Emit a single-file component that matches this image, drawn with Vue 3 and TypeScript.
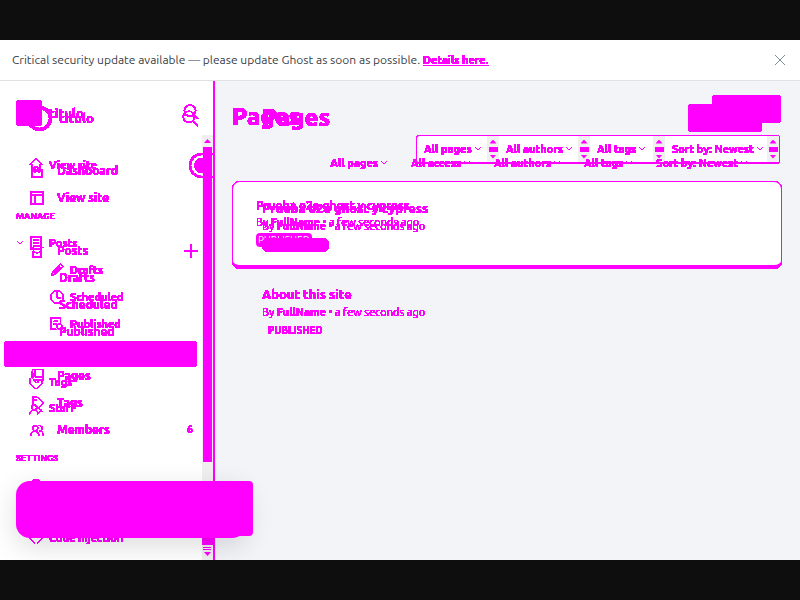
<script setup lang="ts">
interface NavItem {
  label: string
  icon?: string
  kind?: 'child' | 'active' | 'heading' | 'spacer'
  count?: string
  add?: boolean
  caret?: boolean
  size?: 'small' | 'medium' | 'large'
}

const icons: Record<string, string> = {
  home: 'M1 8 8 1l7 7M3 7v8h10V7M6 15v-5h4v5',
  house: 'M2 7h12v8H2zM4 7 8 3l4 4M5 10l3-3 3 3',
  layout: 'M1 1h14v14H1zM1 5h14M6 5v10',
  posts: 'M2 1h12v14H2zM5 5h6M5 8h6M5 11h4',
  postsOpen: 'M1 4h3M12 4h3M4 8l4 3 4-3M3 9v6h10V9M4 2h9v6',
  pen: 'M2 14l1-4 9-9 3 3-9 9zM4 11l7-7M5 12l7-7',
  clock: 'M15 8A7 7 0 1 1 1 8a7 7 0 0 1 14 0M8 3v6h4',
  published: 'M12 6V1H1v13h6M4 5h5M4 8h4M14 11a3 3 0 1 1-6 0 3 3 0 0 1 6 0M13 13l2 2',
  pages: 'M3 0h12v13H5L2 10zM6 0v9h8M3 4v6',
  tag: 'M1 4v6l7 6 7-6V5M5 6l3 3M10 6v3',
  label: 'M3 1h5l7 7-6 6-6-6zM6 4h1v1H6z',
  staff: 'M9 7a3 3 0 1 1-6 0 3 3 0 0 1 6 0M1 15c0-6 9-6 9 0M12 9l3 3M10 15l4-5',
  members: 'M9 6a3 3 0 1 1-6 0 3 3 0 0 1 6 0M1 14c0-6 9-6 9 0M10 3c5-1 5 6 1 6M11 9c3 0 4 2 4 5',
  code: 'M5 3 1 8l5 6M11 3l4 5-5 6',
  gear: 'M5 1h2v2h2V1h2v3l3 2v4l-3 2v3H5v-3l-3-2V6l3-2z',
}

const currentNav: NavItem[] = [
  { label: 'View site', icon: 'home' },
  { label: 'Manage', kind: 'heading', size: 'large' },
  { label: 'Posts', icon: 'posts', caret: true },
  { label: 'Drafts', icon: 'pen', kind: 'child' },
  { label: 'Scheduled', icon: 'clock', kind: 'child' },
  { label: 'Published', icon: 'published', kind: 'child' },
  { label: 'Pages', kind: 'active' },
  { label: 'Tags', icon: 'tag' },
  { label: 'Staff', icon: 'staff' },
  { label: 'Settings', kind: 'heading', size: 'medium' },
  { label: 'General', icon: 'gear' },
  { label: '', kind: 'spacer', size: 'small' },
  { label: 'Code injection', icon: 'code' },
]

const previousNav: NavItem[] = [
  { label: 'Dashboard', icon: 'house' },
  { label: 'View site', icon: 'layout' },
  { label: '', kind: 'spacer', size: 'small' },
  { label: 'Posts', icon: 'postsOpen', add: true },
  { label: 'Drafts', kind: 'child' },
  { label: 'Scheduled', kind: 'child' },
  { label: 'Published', kind: 'child' },
  { label: '', kind: 'spacer', size: 'medium' },
  { label: 'Pages', icon: 'pages' },
  { label: 'Tags', icon: 'label' },
  { label: 'Members', icon: 'members', count: '6' },
]

const currentFilters: string[] = ['All pages', 'All authors', 'All tags', 'Sort by: Newest']
const previousFilters: string[] = ['All pages', 'All access', 'All authors', 'All tags', 'Sort by: Newest']
</script>

<template>
  <div class="page">
    <svg class="defs" aria-hidden="true">
      <filter id="solid" color-interpolation-filters="sRGB">
        <feComponentTransfer><feFuncA type="discrete" tableValues="0 1 1 1 1 1 1 1 1 1 1 1 1 1 1 1" /></feComponentTransfer>
      </filter>
    </svg>
    <header class="banner">
      <p>Critical security update available — please update Ghost as soon as possible. <a href="#" class="details">Details here.</a></p>
      <button class="close" aria-label="Close">
        <svg viewBox="0 0 12 12"><path d="M1 1l10 10M11 1 1 11" /></svg>
      </button>
    </header>

    <div class="workspace">
      <div class="layer base">
        <div class="side">
          <div class="track">
            <i class="arrow up"></i>
            <i class="thumb"></i>
            <i class="rest"></i>
            <i class="block"></i>
            <i class="lines"></i>
            <i class="arrow down"></i>
          </div>
        </div>
        <div></div>
      </div>

      <div class="layer current marks">
        <aside class="side">
          <div class="brand">
            <span class="logo"></span>
            <strong>titulo</strong>
            <button class="search" aria-label="Search">
              <svg viewBox="0 0 16 16"><path d="M13 6A5 5 0 1 1 3 6a5 5 0 0 1 10 0M12 10l3 3" /></svg>
            </button>
          </div>
          <nav>
            <template v-for="(item, i) in currentNav" :key="i">
              <h4 v-if="item.kind === 'heading'" :class="item.size">{{ item.label }}</h4>
              <div v-else-if="item.kind === 'spacer'" class="spacer" :class="item.size"></div>
              <a v-else href="#" class="row" :class="item.kind" :aria-label="item.label">
                <svg v-if="item.caret" class="caret" viewBox="0 0 8 8"><path d="M1 2l3 3 3-3" /></svg>
                <svg v-if="item.icon" class="icon" viewBox="0 0 16 16"><path :d="icons[item.icon]" /></svg>
                <span v-if="item.kind !== 'active'">{{ item.label }}</span>
              </a>
            </template>
          </nav>
        </aside>
        <main>
          <div class="title-row">
            <h1>Pages</h1>
            <button class="new-page" aria-label="New page"></button>
          </div>
          <div class="filter-bar">
            <div v-for="name in currentFilters" :key="name" class="cell">
              <select :aria-label="name"><option>{{ name }}</option></select>
              <svg class="chev" viewBox="0 0 8 8"><path d="M1 2l3 3 3-3" /></svg>
              <span class="stepper"><i class="arrow up"></i><i class="bar"></i><i class="arrow down"></i></span>
            </div>
          </div>
          <article class="card">
            <h3>Prueba e2e ghost y cypress</h3>
            <p>By <b>FullName</b> • a few seconds ago</p>
            <span class="badge">PUBLISHED</span>
          </article>
        </main>
      </div>

      <div class="layer previous marks">
        <aside class="side">
          <div class="brand">
            <span class="avatar"></span>
            <strong>titulo</strong>
            <button class="search" aria-label="Search">
              <svg viewBox="0 0 16 16"><path d="M12 7A5 5 0 1 1 2 7a5 5 0 0 1 10 0M11 11l4 4" /></svg>
            </button>
          </div>
          <nav>
            <template v-for="(item, i) in previousNav" :key="i">
              <div v-if="item.kind === 'spacer'" class="spacer" :class="item.size"></div>
              <a v-else href="#" class="row" :class="item.kind">
                <svg v-if="item.icon" class="icon" viewBox="0 0 16 16"><path :d="icons[item.icon]" /></svg>
                <span>{{ item.label }}</span>
                <svg v-if="item.add" class="add" viewBox="0 0 14 14"><path d="M7 0v14M0 7h14" /></svg>
                <em v-if="item.count">{{ item.count }}</em>
              </a>
            </template>
          </nav>
          <span class="pulse"></span>
        </aside>
        <main>
          <div class="title-row">
            <h1>Pages</h1>
            <button class="new-page" aria-label="New page"></button>
          </div>
          <div class="filters">
            <label v-for="name in previousFilters" :key="name">
              <select :aria-label="name"><option>{{ name }}</option></select>
              <svg class="chev" viewBox="0 0 8 8"><path d="M1 2l3 3 3-3" /></svg>
            </label>
          </div>
          <article class="entry">
            <h3>Prueba e2e ghost y cypress</h3>
            <p>By <b>FullName</b> • a few seconds ago</p>
            <span class="badge">PUBLISHED</span>
          </article>
          <article class="entry">
            <h3>About this site</h3>
            <p>By <b>FullName</b> • a few seconds ago</p>
            <span class="badge plain">PUBLISHED</span>
          </article>
        </main>
      </div>

      <div class="toast round"></div>
      <div class="toast square"></div>
    </div>
  </div>
</template>

<style>
body {
  background: #0e0e0e;
}
</style>

<style scoped>
* {
  box-sizing: border-box;
}
.page {
  --mark: #ff00ff;
  min-height: 100vh;
  padding: 40px 0;
  display: flex;
  flex-direction: column;
  background: #0e0e0e;
  font-family: Ubuntu, "Noto Sans", sans-serif;
  font-size: 12px;
  line-height: 16px;
}
.defs {
  position: absolute;
  width: 0;
  height: 0;
}
h1, h3, h4, p {
  margin: 0;
}
a {
  color: inherit;
  text-decoration: none;
}
button, select {
  appearance: none;
  border: 0;
  padding: 0;
  background: none;
  font: inherit;
  color: inherit;
}
svg {
  display: block;
  flex: none;
  fill: none;
  stroke: currentColor;
}
.banner {
  height: 41px;
  padding: 0 14px 1px 12px;
  display: flex;
  align-items: center;
  justify-content: space-between;
  background: #fff;
  border-bottom: 1px solid #dfe1e3;
  color: #394047;
}
.details {
  color: var(--mark);
  font-size: 11px;
  font-weight: 700;
  text-decoration: underline;
  filter: url(#solid);
}
.close svg {
  width: 12px;
  height: 12px;
  stroke: #7c8b9a;
}
.workspace {
  position: relative;
  flex: 1;
  display: grid;
  background: #f2f4f8;
  overflow: hidden;
}
.layer {
  grid-area: 1 / 1;
  display: grid;
  grid-template-columns: 215px minmax(0, 1fr);
  min-height: 0;
  color: var(--mark);
}
.marks {
  filter: url(#solid);
  height: 0;
  min-height: 100%;
}
.base .side {
  display: flex;
  justify-content: flex-end;
  padding-top: 54px;
  background: #fff;
  border-right: 2px solid var(--mark);
}
.track {
  width: 11px;
  display: flex;
  flex-direction: column;
  align-items: center;
  background: #f0f0f0;
}
.arrow {
  width: 7px;
  height: 4px;
  flex: none;
  background: var(--mark);
}
.up {
  clip-path: polygon(50% 0, 100% 100%, 0 100%);
}
.down {
  clip-path: polygon(0 0, 100% 0, 50% 100%);
}
.track .up {
  margin: 4px 0;
}
.track .down {
  margin: 2px 0 4px;
}
.thumb {
  width: 9px;
  height: 74%;
  background: var(--mark);
}
.rest {
  flex: 1;
}
.block {
  width: 100%;
  height: 12px;
  background: var(--mark);
}
.lines {
  width: 8px;
  height: 3px;
  margin: 2px 2px 0 0;
  border: solid var(--mark);
  border-width: 1px 0;
}

.current .side {
  padding-top: 19px;
}
.previous .side {
  position: relative;
  padding-top: 24px;
}
.brand {
  height: 26px;
  padding: 0 16px;
  display: flex;
  align-items: center;
  font-size: 13px;
  font-weight: 700;
}
.logo {
  width: 26px;
  height: 26px;
  margin-right: 7px;
  border-radius: 4px;
  background: currentColor;
}
.avatar {
  width: 25px;
  height: 25px;
  margin: 0 7px 0 11px;
  border: 3px solid currentColor;
  border-radius: 50%;
}
.search {
  margin-left: auto;
}
.search svg {
  width: 18px;
  height: 18px;
  stroke-width: 1;
}
.current nav {
  margin-top: 26px;
  font-size: 11px;
}
.previous nav {
  margin-top: 26px;
}
.row {
  height: 26px;
  padding-left: 29px;
  display: flex;
  align-items: center;
  gap: 6px;
  font-weight: 600;
}
.previous .row {
  height: 27px;
  padding: 0 17px 0 30px;
  gap: 13px;
}
.icon {
  width: 14px;
  height: 14px;
}
.row.child {
  height: 27px;
  padding-left: 50px;
}
.previous .row.child {
  padding-left: 59px;
}
.row.active {
  margin: 4px 18px 2px 4px;
  border-radius: 4px;
  background: currentColor;
}
.caret {
  width: 8px;
  height: 8px;
  margin: 0 -1px 0 -13px;
}
.add {
  width: 14px;
  height: 14px;
  margin-left: auto;
  stroke-width: 2;
  shape-rendering: crispEdges;
}
.row em {
  margin-left: auto;
  padding-right: 5px;
  font-style: normal;
  font-weight: 800;
  font-size: 10px;
}
h4 {
  padding: 0 16px;
  font-size: 9px;
  line-height: 12px;
  text-transform: uppercase;
}
h4.large {
  margin: 32px 0 8px;
}
h4.medium {
  margin: 31px 0 9px;
}
.spacer.small {
  height: 26px;
}
.spacer.medium {
  height: 17px;
}
.pulse {
  position: absolute;
  top: 72px;
  right: 0;
  width: 26px;
  height: 25px;
  border: 2px solid currentColor;
  border-right: 0;
  border-radius: 13px 0 0 13px;
  background: radial-gradient(circle at 11px 50%, currentColor 8px, transparent 8px);
}

.current main {
  padding: 14px 18px 0 17px;
}
.previous main {
  padding: 23px 38px 0 47px;
}
.title-row {
  display: flex;
  justify-content: space-between;
  align-items: flex-start;
}
h1 {
  font-size: 24px;
  line-height: 28px;
  font-weight: 800;
}
.current h1 {
  padding-top: 8px;
}
.current .title-row {
  height: 37px;
}
.new-page {
  width: 69px;
  height: 28px;
  margin-right: 1px;
  border-radius: 4px;
  background: currentColor;
}
.previous .new-page {
  width: 74px;
  margin-right: 0;
}
.filter-bar {
  width: fit-content;
  height: 29px;
  margin: 3px 2px 0 auto;
  display: grid;
  grid-template-columns: 82px 91px 75px 114px;
  border: 1px solid currentColor;
  border-bottom-width: 2px;
  border-radius: 4px;
  background: #fff;
  font-size: 11px;
  font-weight: 600;
}
.cell {
  display: flex;
  align-items: center;
  padding-left: 7px;
}
.cell select,
.cell .chev,
.card h3,
.card p {
  filter: url(#solid);
}
select {
  field-sizing: content;
  cursor: pointer;
}
.chev {
  width: 8px;
  height: 8px;
  margin-left: 2px;
}
.stepper {
  align-self: stretch;
  width: 12px;
  margin-left: auto;
  display: flex;
  flex-direction: column;
  align-items: center;
  justify-content: center;
  gap: 3px;
  background: #f0f0f0;
}
.bar {
  width: 9px;
  height: 5px;
  background: currentColor;
}
.filters {
  margin-top: 23px;
  padding-right: 14px;
  display: flex;
  justify-content: flex-end;
  gap: 23px;
  font-size: 11px;
  font-weight: 600;
}
.filters label {
  display: flex;
  align-items: center;
}
.card {
  height: 88px;
  margin-top: 17px;
  padding: 15px 23px;
  border: 1px solid currentColor;
  border-bottom-width: 4px;
  border-radius: 8px;
  background: #fff;
}
h3 {
  font-size: 12px;
  line-height: 18px;
}
.card p,
.entry p {
  font-size: 11px;
  line-height: 14px;
}
.badge {
  display: block;
  width: fit-content;
  margin-top: 4px;
  padding: 0 2px;
  border-radius: 4px;
  background: currentColor;
  font-size: 10px;
  line-height: 14px;
}
.card .badge::first-line {
  color: #fff;
}
.entry {
  height: 86px;
  margin-top: 28px;
}
.entry + .entry {
  margin-top: 0;
}
.entry h3 {
  font-size: 13px;
}
.entry p {
  margin-top: 2px;
}
.entry .badge {
  margin-top: 5px;
  padding: 0 6px;
  border-radius: 7px;
  font-weight: 600;
}
.entry .badge.plain {
  background: none;
}
.toast {
  position: absolute;
  background: var(--mark);
}
.toast.round {
  left: 16px;
  bottom: 22px;
  width: 230px;
  height: 57px;
  border-radius: 14px;
  box-shadow: 0 8px 28px rgba(0, 0, 0, 0.14);
}
.toast.square {
  left: 26px;
  bottom: 24px;
  width: 227px;
  height: 55px;
  border-radius: 4px;
}
</style>
